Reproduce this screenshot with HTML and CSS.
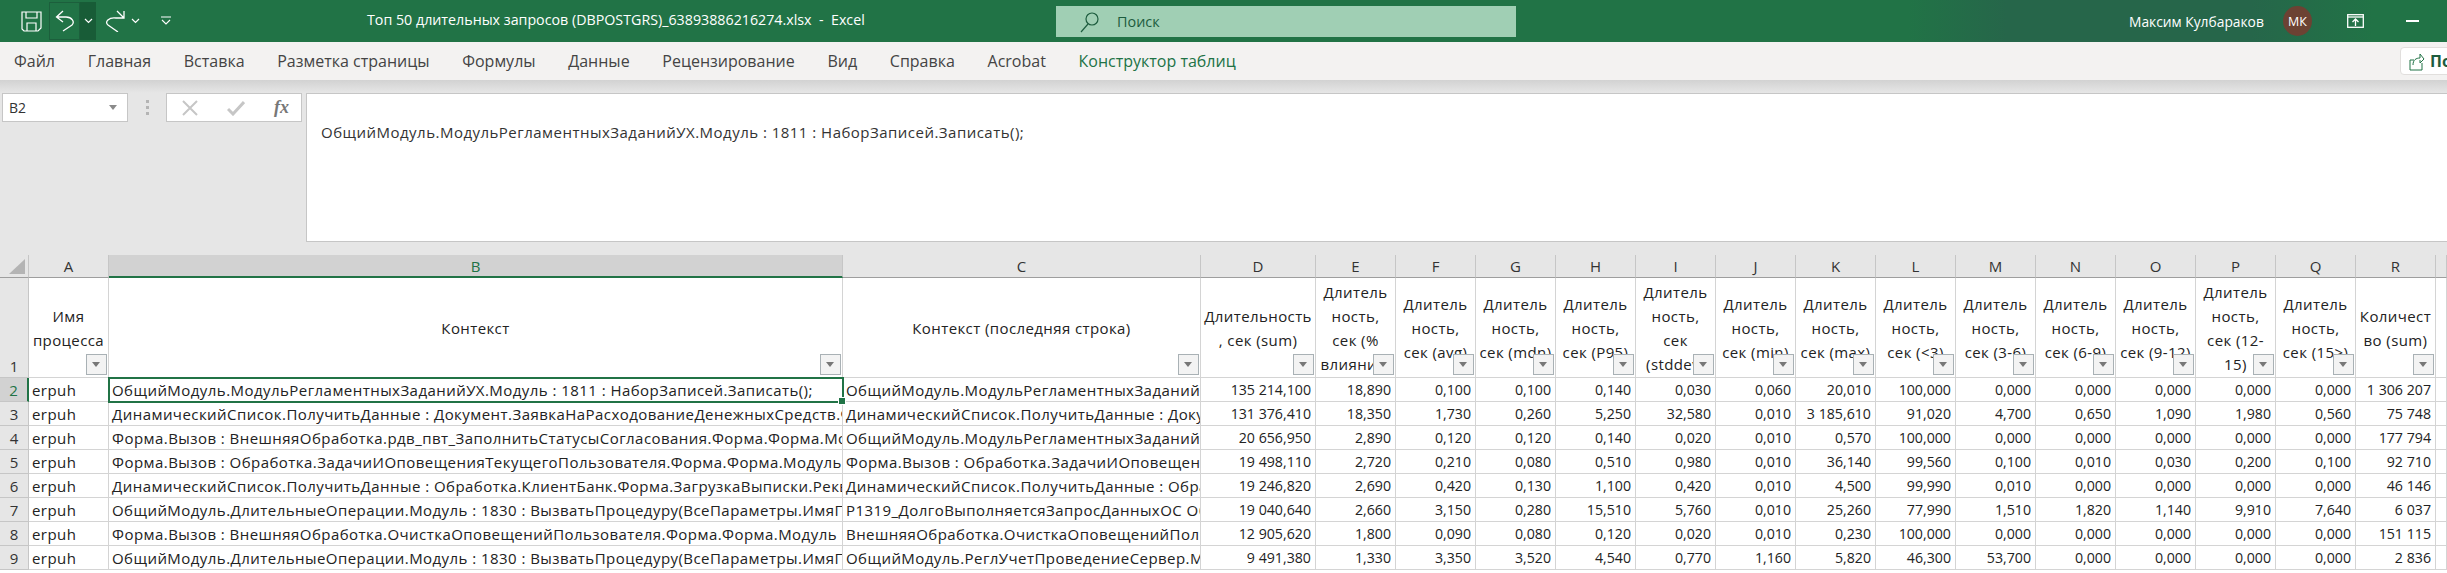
FILE: index.html
```html
<!DOCTYPE html>
<html lang="ru">

<head>
    <meta charset="UTF-8">
    <title>Топ 50 длительных запросов - Excel</title>
    <link rel="stylesheet" href="styles.css">
</head>

<body>
    <header class="titlebar">
        <div class="qat">
            <svg class="icon-save" width="21" height="21" viewBox="0 0 21 21" fill="none" stroke="#fff" stroke-width="1.2">
                <path d="M1 1H20V17L17 20H3L1 18Z" />
                <path d="M5 1V7H16V1" />
                <path d="M6 20V12H15V20" />
            </svg>
            <div class="qat-split">
                <span class="qat-main">
                    <svg width="20" height="22" viewBox="0 0 20 22" fill="none" stroke="#fff" stroke-width="1.3">
                        <path d="M8 1L1.5 7L8 12M1.5 7H11C17 7 20 12 17 15L8 21" />
                    </svg>
                </span>
                <span class="qat-drop">
                    <svg width="9" height="6" viewBox="0 0 9 6" fill="none" stroke="#fff" stroke-width="1.2"><path d="M1 1L4.5 4.5L8 1" /></svg>
                </span>
            </div>
            <svg class="icon-redo" width="20" height="22" viewBox="0 0 20 22" fill="none" stroke="#fff" stroke-width="1.3">
                <path d="M19 1V8H11C4 7 -1 12 3 15L13 22M19 8L12 1" />
            </svg>
            <svg class="icon-chev" width="9" height="6" viewBox="0 0 9 6" fill="none" stroke="#fff" stroke-width="1.2"><path d="M1 1L4.5 4.5L8 1" /></svg>
            <svg class="icon-custom" width="10" height="10" viewBox="0 0 10 10" fill="none" stroke="#fff" stroke-width="1.1"><path d="M0 1H10M1 4L5 8L9 4" /></svg>
        </div>
        <div class="doc-title">Топ 50 длительных запросов (DBPOSTGRS)_63893886216274.xlsx &nbsp;-&nbsp; Excel</div>
        <div class="search">
            <svg width="20" height="22" viewBox="0 0 20 22" fill="none" stroke="#1d5c3e" stroke-width="1.2">
                <circle cx="12" cy="8" r="6" />
                <path d="M8 13L1 21" />
            </svg>
            <span>Поиск</span>
        </div>
        <div class="user-name">Максим Кулбараков</div>
        <div class="avatar">МК</div>
        <svg class="icon-display" width="17" height="14" viewBox="0 0 17 14" fill="none" stroke="#fff" stroke-width="1.3">
            <rect x="0.7" y="0.7" width="15.6" height="12.6" />
            <path d="M1 3H16" />
            <path d="M8.5 12V5.5M5.5 8L8.5 5L11.5 8" />
        </svg>
        <div class="minimize"></div>
    </header>

    <nav class="tabs">
        <span class="tab">Файл</span>
        <span class="tab">Главная</span>
        <span class="tab">Вставка</span>
        <span class="tab">Разметка страницы</span>
        <span class="tab">Формулы</span>
        <span class="tab">Данные</span>
        <span class="tab">Рецензирование</span>
        <span class="tab">Вид</span>
        <span class="tab">Справка</span>
        <span class="tab">Acrobat</span>
        <span class="tab tab-green">Конструктор таблиц</span>
        <div class="share">
            <svg width="16" height="19" viewBox="0 0 16 19" fill="none" stroke="#217346" stroke-width="1">
                <path d="M5 8H1V18H13V11" />
                <path d="M4 13C4 8 7 6 11 6V2L15 7L11 11V8" />
            </svg>
            <b>Поделиться</b>
        </div>
    </nav>

    <section class="formula-bar">
        <div class="name-box">
            <span>B2</span>
            <i class="caret"></i>
        </div>
        <div class="grip"><i></i><i></i><i></i></div>
        <div class="fx-box">
            <svg width="16" height="16" viewBox="0 0 16 16" fill="none" stroke="#c6c6c6" stroke-width="2"><path d="M1 1L15 15M15 1L1 15" /></svg>
            <svg width="18" height="16" viewBox="0 0 18 16" fill="none" stroke="#c6c6c6" stroke-width="3"><path d="M1 9L6 14L17 2" /></svg>
            <span class="fx">fx</span>
        </div>
        <div class="formula-text">ОбщийМодуль.МодульРегламентныхЗаданийУХ.Модуль : 1811 : НаборЗаписей.Записать();</div>
    </section>

    <main class="sheet">
        <table class="grid">
            <colgroup>
                <col class="w-hdr">
                <col class="w-a">
                <col class="w-b">
                <col class="w-c">
                <col class="w-d">
                <col class="w-n" span="14">
                <col class="w-s">
            </colgroup>
            <thead>
                <tr class="col-heads">
                    <th class="corner"><i></i></th>
                    <th>A</th>
                    <th class="sel">B</th>
                    <th>C</th>
                    <th>D</th>
                    <th>E</th>
                    <th>F</th>
                    <th>G</th>
                    <th>H</th>
                    <th>I</th>
                    <th>J</th>
                    <th>K</th>
                    <th>L</th>
                    <th>M</th>
                    <th>N</th>
                    <th>O</th>
                    <th>P</th>
                    <th>Q</th>
                    <th>R</th>
                    <th></th>
                </tr>
            </thead>
            <tbody>
                <tr class="row-head">
                    <th class="num num-low">1</th>
                    <td>Имя<br>процесса<i class="filter"></i></td>
                    <td>Контекст<i class="filter"></i></td>
                    <td>Контекст (последняя строка)<i class="filter"></i></td>
                    <td>Длительность<br>, сек (sum)<i class="filter"></i></td>
                    <td>Длитель<br>ность,<br>сек (%<br>влияния)<i class="filter"></i></td>
                    <td>Длитель<br>ность,<br>сек (avg)<i class="filter"></i></td>
                    <td>Длитель<br>ность,<br>сек (mdn)<i class="filter"></i></td>
                    <td>Длитель<br>ность,<br>сек (P95)<i class="filter"></i></td>
                    <td>Длитель<br>ность,<br>сек<br>(stddev)<i class="filter"></i></td>
                    <td>Длитель<br>ность,<br>сек (min)<i class="filter"></i></td>
                    <td>Длитель<br>ность,<br>сек (max)<i class="filter"></i></td>
                    <td>Длитель<br>ность,<br>сек (&lt;3)<i class="filter"></i></td>
                    <td>Длитель<br>ность,<br>сек (3-6)<i class="filter"></i></td>
                    <td>Длитель<br>ность,<br>сек (6-9)<i class="filter"></i></td>
                    <td>Длитель<br>ность,<br>сек (9-12)<i class="filter"></i></td>
                    <td>Длитель<br>ность,<br>сек (12-<br>15)<i class="filter"></i></td>
                    <td>Длитель<br>ность,<br>сек (15&gt;)<i class="filter"></i></td>
                    <td>Количест<br>во (sum)<i class="filter"></i></td>
                    <td></td>
                </tr>
                <tr>
                    <th class="num sel">2</th>
                    <td class="txt">erpuh</td>
                    <td class="txt active">ОбщийМодуль.МодульРегламентныхЗаданийУХ.Модуль : 1811 : НаборЗаписей.Записать();<i class="handle"></i></td>
                    <td class="txt">ОбщийМодуль.МодульРегламентныхЗаданийУХ.Модуль</td>
                    <td>135 214,100</td>
                    <td>18,890</td>
                    <td>0,100</td>
                    <td>0,100</td>
                    <td>0,140</td>
                    <td>0,030</td>
                    <td>0,060</td>
                    <td>20,010</td>
                    <td>100,000</td>
                    <td>0,000</td>
                    <td>0,000</td>
                    <td>0,000</td>
                    <td>0,000</td>
                    <td>0,000</td>
                    <td>1 306 207</td>
                    <td></td>
                </tr>
                <tr>
                    <th class="num">3</th>
                    <td class="txt">erpuh</td>
                    <td class="txt">ДинамическийСписок.ПолучитьДанные : Документ.ЗаявкаНаРасходованиеДенежныхСредств.Форма</td>
                    <td class="txt">ДинамическийСписок.ПолучитьДанные : Документ.Заявка</td>
                    <td>131 376,410</td>
                    <td>18,350</td>
                    <td>1,730</td>
                    <td>0,260</td>
                    <td>5,250</td>
                    <td>32,580</td>
                    <td>0,010</td>
                    <td>3 185,610</td>
                    <td>91,020</td>
                    <td>4,700</td>
                    <td>0,650</td>
                    <td>1,090</td>
                    <td>1,980</td>
                    <td>0,560</td>
                    <td>75 748</td>
                    <td></td>
                </tr>
                <tr>
                    <th class="num">4</th>
                    <td class="txt">erpuh</td>
                    <td class="txt">Форма.Вызов : ВнешняяОбработка.рдв_пвт_ЗаполнитьСтатусыСогласования.Форма.Форма.Модуль</td>
                    <td class="txt">ОбщийМодуль.МодульРегламентныхЗаданийУХ.Модуль</td>
                    <td>20 656,950</td>
                    <td>2,890</td>
                    <td>0,120</td>
                    <td>0,120</td>
                    <td>0,140</td>
                    <td>0,020</td>
                    <td>0,010</td>
                    <td>0,570</td>
                    <td>100,000</td>
                    <td>0,000</td>
                    <td>0,000</td>
                    <td>0,000</td>
                    <td>0,000</td>
                    <td>0,000</td>
                    <td>177 794</td>
                    <td></td>
                </tr>
                <tr>
                    <th class="num">5</th>
                    <td class="txt">erpuh</td>
                    <td class="txt">Форма.Вызов : Обработка.ЗадачиИОповещенияТекущегоПользователя.Форма.Форма.Модуль</td>
                    <td class="txt">Форма.Вызов : Обработка.ЗадачиИОповещенияТекущего</td>
                    <td>19 498,110</td>
                    <td>2,720</td>
                    <td>0,210</td>
                    <td>0,080</td>
                    <td>0,510</td>
                    <td>0,980</td>
                    <td>0,010</td>
                    <td>36,140</td>
                    <td>99,560</td>
                    <td>0,100</td>
                    <td>0,010</td>
                    <td>0,030</td>
                    <td>0,200</td>
                    <td>0,100</td>
                    <td>92 710</td>
                    <td></td>
                </tr>
                <tr>
                    <th class="num">6</th>
                    <td class="txt">erpuh</td>
                    <td class="txt">ДинамическийСписок.ПолучитьДанные : Обработка.КлиентБанк.Форма.ЗагрузкаВыписки.РеквизитыФормы</td>
                    <td class="txt">ДинамическийСписок.ПолучитьДанные : Обработка.Клиент</td>
                    <td>19 246,820</td>
                    <td>2,690</td>
                    <td>0,420</td>
                    <td>0,130</td>
                    <td>1,100</td>
                    <td>0,420</td>
                    <td>0,010</td>
                    <td>4,500</td>
                    <td>99,990</td>
                    <td>0,010</td>
                    <td>0,000</td>
                    <td>0,000</td>
                    <td>0,000</td>
                    <td>0,000</td>
                    <td>46 146</td>
                    <td></td>
                </tr>
                <tr>
                    <th class="num">7</th>
                    <td class="txt">erpuh</td>
                    <td class="txt">ОбщийМодуль.ДлительныеОперации.Модуль : 1830 : ВызватьПроцедуру(ВсеПараметры.ИмяПроцедуры</td>
                    <td class="txt">P1319_ДолгоВыполняетсяЗапросДанныхОС ОбщийМодуль</td>
                    <td>19 040,640</td>
                    <td>2,660</td>
                    <td>3,150</td>
                    <td>0,280</td>
                    <td>15,510</td>
                    <td>5,760</td>
                    <td>0,010</td>
                    <td>25,260</td>
                    <td>77,990</td>
                    <td>1,510</td>
                    <td>1,820</td>
                    <td>1,140</td>
                    <td>9,910</td>
                    <td>7,640</td>
                    <td>6 037</td>
                    <td></td>
                </tr>
                <tr>
                    <th class="num">8</th>
                    <td class="txt">erpuh</td>
                    <td class="txt">Форма.Вызов : ВнешняяОбработка.ОчисткаОповещенийПользователя.Форма.Форма.Модуль</td>
                    <td class="txt">ВнешняяОбработка.ОчисткаОповещенийПользователя.Форма</td>
                    <td>12 905,620</td>
                    <td>1,800</td>
                    <td>0,090</td>
                    <td>0,080</td>
                    <td>0,120</td>
                    <td>0,020</td>
                    <td>0,010</td>
                    <td>0,230</td>
                    <td>100,000</td>
                    <td>0,000</td>
                    <td>0,000</td>
                    <td>0,000</td>
                    <td>0,000</td>
                    <td>0,000</td>
                    <td>151 115</td>
                    <td></td>
                </tr>
                <tr>
                    <th class="num">9</th>
                    <td class="txt">erpuh</td>
                    <td class="txt">ОбщийМодуль.ДлительныеОперации.Модуль : 1830 : ВызватьПроцедуру(ВсеПараметры.ИмяПроцедуры</td>
                    <td class="txt">ОбщийМодуль.РеглУчетПроведениеСервер.Модуль</td>
                    <td>9 491,380</td>
                    <td>1,330</td>
                    <td>3,350</td>
                    <td>3,520</td>
                    <td>4,540</td>
                    <td>0,770</td>
                    <td>1,160</td>
                    <td>5,820</td>
                    <td>46,300</td>
                    <td>53,700</td>
                    <td>0,000</td>
                    <td>0,000</td>
                    <td>0,000</td>
                    <td>0,000</td>
                    <td>2 836</td>
                    <td></td>
                </tr>
            </tbody>
        </table>
    </main>
</body>

</html>
```

FILE: styles.css
```css
html,
body {
    margin: 0;
    padding: 0;
    height: 100%;
    overflow: hidden;
}

body {
    font-family: "Open Sans", "Noto Sans", sans-serif;
    background-color: #fff;
    color: #333;
}

/* title bar */
.titlebar {
    display: flex;
    align-items: center;
    height: 42px;
    color: #fff;
    background-color: #217346;
    background-image: linear-gradient(90deg, #217346 0, #217346 78%, #26664a 82%, #26664a 92%, #217346 97%);
}

.qat {
    display: flex;
    align-items: center;
    width: 367px;
    height: 42px;
    padding-left: 21px;
    box-sizing: border-box;
}

.qat-split {
    display: flex;
    height: 38px;
    margin-left: 7px;
}

.qat-main {
    display: flex;
    align-items: center;
    justify-content: center;
    width: 31px;
    border: 1px solid #1c5f3c;
    box-sizing: border-box;
}

.qat-drop {
    display: flex;
    align-items: center;
    justify-content: center;
    width: 16px;
    background-color: #185c37;
}

.icon-redo {
    margin-left: 9px;
}

.icon-chev {
    margin-left: 6px;
}

.icon-custom {
    margin-left: 21px;
}

.doc-title {
    width: 689px;
    font-size: 14.25px;
    white-space: nowrap;
    margin-top: -4px;
}

.search {
    display: flex;
    align-items: center;
    width: 460px;
    height: 31px;
    padding-left: 24px;
    margin-top: 1px;
    box-sizing: border-box;
    background-color: #a0cfb4;
    color: #1d5c3e;
    font-size: 14.4px;
}

.search span {
    margin-left: 17px;
}

.user-name {
    width: 141px;
    margin-left: 613px;
    font-size: 13.8px;
    white-space: nowrap;
}

.avatar {
    display: flex;
    align-items: center;
    justify-content: center;
    width: 29px;
    height: 30px;
    margin-left: 13px;
    border-radius: 50%;
    background-color: #6c4233;
    font-size: 12.5px;
}

.icon-display {
    margin-left: 35px;
}

.minimize {
    width: 13px;
    height: 2px;
    margin-left: 42px;
    background-color: #fff;
}

/* ribbon tabs */
.tabs {
    display: flex;
    align-items: center;
    height: 38px;
    padding-left: 14px;
    background-color: #f3f2f1;
    font-size: 16px;
    color: #444;
    white-space: nowrap;
}

.tab {
    margin-right: 32.7px;
}

.tab-green {
    color: #217346;
}

.share {
    display: flex;
    align-items: center;
    gap: 5px;
    position: absolute;
    left: 2400px;
    top: 47px;
    width: 140px;
    height: 28px;
    padding-left: 8px;
    box-sizing: border-box;
    background-color: #fff;
    border: 1px solid #e1dfdd;
    border-radius: 4px;
    color: #1d5c3e;
    font-size: 16px;
}

.share svg {
    flex-shrink: 0;
}

/* formula bar */
.formula-bar {
    display: flex;
    align-items: flex-start;
    height: 175px;
    padding: 13px 0 0 2px;
    box-sizing: border-box;
    background-color: #e6e6e6;
    background-image: linear-gradient(#d2d2d2, #e6e6e6 13px);
}

.name-box {
    display: flex;
    align-items: center;
    justify-content: space-between;
    width: 126px;
    height: 29px;
    padding: 0 6px;
    box-sizing: border-box;
    background-color: #fff;
    border: 1px solid #c6c6c6;
    font-size: 14px;
}

.caret {
    width: 0;
    height: 0;
    margin-right: 4px;
    border-left: 4px solid transparent;
    border-right: 4px solid transparent;
    border-top: 5px solid #8a8a8a;
}

.grip {
    display: flex;
    flex-direction: column;
    justify-content: center;
    gap: 3px;
    width: 38px;
    height: 29px;
    align-items: center;
}

.grip i {
    width: 3px;
    height: 3px;
    background-color: #b4b4b4;
}

.fx-box {
    display: flex;
    align-items: center;
    width: 136px;
    height: 29px;
    padding-left: 15px;
    gap: 29px;
    box-sizing: border-box;
    background-color: #fff;
    border: 1px solid #c6c6c6;
}

.fx {
    font-family: "Liberation Serif", serif;
    font-style: italic;
    font-weight: bold;
    font-size: 18px;
    color: #777;
}

.formula-text {
    flex: 1;
    height: 149px;
    margin-left: 4px;
    padding: 26px 0 0 14px;
    box-sizing: border-box;
    background-color: #fff;
    border: 1px solid #c6c6c6;
    border-right: none;
    font-size: 15px;
    letter-spacing: 0.48px;
    line-height: 24px;
}

/* grid */
.sheet {
    height: 318px;
    overflow: hidden;
}

.grid {
    table-layout: fixed;
    border-collapse: separate;
    border-spacing: 0;
    width: 2447px;
    font-size: 14.2px;
    color: #222;
}

.w-hdr {
    width: 29px;
}

.w-a {
    width: 80px;
}

.w-b {
    width: 734px;
}

.w-c {
    width: 358px;
}

.w-d {
    width: 115px;
}

.w-n {
    width: 80px;
}

.w-s {
    width: 11px;
}

.grid th {
    font-weight: normal;
    background-color: #e6e6e6;
    color: #333;
    padding: 0;
}

.col-heads th {
    height: 22px;
    border-right: 1px solid #c6c6c6;
    border-bottom: 1px solid #9e9e9e;
    font-size: 15px;
    text-align: center;
}

.col-heads th.sel {
    color: #217346;
    background-color: #d2d2d2;
    border-bottom: 2px solid #217346;
    height: 21px;
}

.corner {
    position: relative;
}

.corner i {
    position: absolute;
    right: 3px;
    bottom: 3px;
    width: 16px;
    height: 15px;
    background-color: #b4b4b4;
    clip-path: polygon(100% 0, 100% 100%, 0 100%);
}

.num {
    font-size: 15px;
    text-align: center;
    border-right: 1px solid #c6c6c6;
    border-bottom: 1px solid #c6c6c6;
}

.num.num-low {
    vertical-align: bottom;
    line-height: 22px;
}

.num.sel {
    background-color: #d2d2d2;
    color: #217346;
    border-right: 2px solid #217346;
}

.grid td {
    height: 23px;
    padding: 0 4px 0 3px;
    border-right: 1px solid #d4d4d4;
    border-bottom: 1px solid #d4d4d4;
    text-align: right;
    white-space: nowrap;
    overflow: hidden;
}

.grid td.txt {
    text-align: left;
    font-size: 15px;
    letter-spacing: 0.45px;
}

.row-head td {
    position: relative;
    height: 99px;
    padding: 0;
    text-align: center;
    line-height: 24px;
    font-size: 15px;
    letter-spacing: 0.4px;
}

.filter {
    position: absolute;
    right: 1px;
    bottom: 2px;
    width: 19px;
    height: 19px;
    background-color: #f3f3f3;
    border: 1px solid #a9b1b5;
}

.filter::after {
    content: "";
    position: absolute;
    left: 5px;
    top: 7px;
    border-left: 4px solid transparent;
    border-right: 4px solid transparent;
    border-top: 5px solid #777;
}

.grid td.active {
    position: relative;
    overflow: visible;
    outline: 2px solid #217346;
    outline-offset: -1px;
}

.handle {
    position: absolute;
    right: -4px;
    bottom: -4px;
    z-index: 2;
    width: 6px;
    height: 6px;
    background-color: #217346;
    border: 1px solid #fff;
}
```
